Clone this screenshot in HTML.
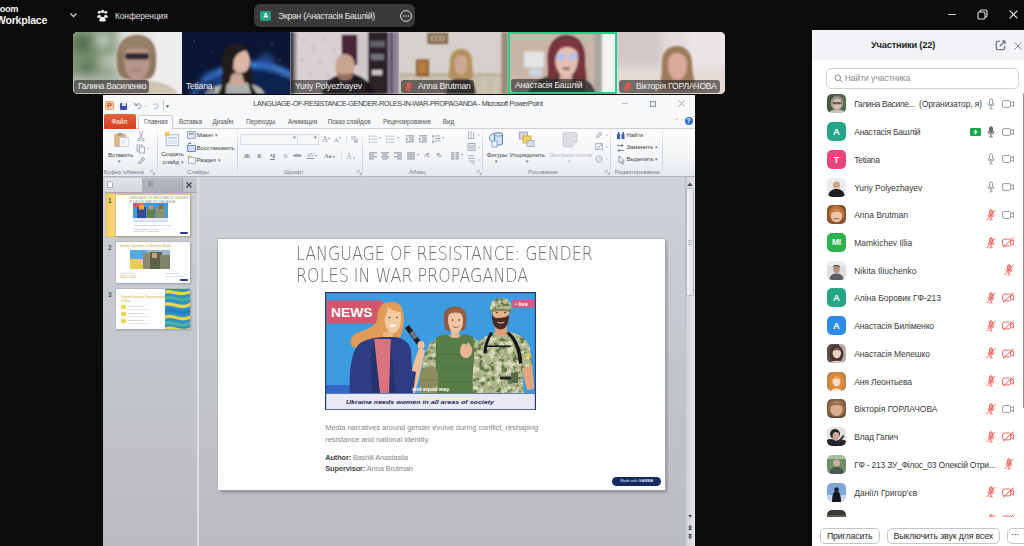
<!DOCTYPE html>
<html lang="ru">
<head>
<meta charset="utf-8">
<title>Zoom Workplace</title>
<style>
*{box-sizing:border-box;margin:0;padding:0}
html,body{width:1024px;height:546px;overflow:hidden;background:#0b0b0b}
body{position:relative;font-family:"Liberation Sans",sans-serif;color:#222}
.abs{position:absolute}
.t{position:absolute;white-space:nowrap;line-height:1}
/* ---------- top bar ---------- */
#top{left:0;top:0;width:1024px;height:30px;background:#0b0b0b}
#top .t{color:#e4e4e4}
/* ---------- video strip ---------- */
.tile{position:absolute;top:32px;height:62px;overflow:hidden}
.tile .nm{position:absolute;left:2px;bottom:1px;height:13px;padding:0 3px 0 4px;border-radius:3px;background:rgba(40,40,40,.62);color:#f2f2f2;font-size:8.6px;letter-spacing:-0.2px;line-height:13.5px;white-space:nowrap}
/* ---------- powerpoint ---------- */
#ppt{left:103px;top:95px;width:592px;height:451px;background:#c2c6cc;overflow:hidden}
#ppt .t{color:#444}
.tb{font-size:6.4px;color:#555 !important;letter-spacing:-0.1px}
.rb{font-size:6.1px;color:#444;letter-spacing:-0.1px}
.gl{font-size:6px;color:#7a808c !important;letter-spacing:-0.05px}
/* ---------- panel ---------- */
#panel{left:812px;top:30px;width:212px;height:516px;background:#fff;overflow:hidden}
.row{position:absolute;left:0;width:212px;height:19px}
.av{position:absolute;left:15px;top:0;width:19px;height:19px;border-radius:5px;overflow:hidden;color:#fff;font-weight:bold;font-size:9px;line-height:19px;text-align:center}
.row .n{position:absolute;left:42.2px;top:4px;font-size:8.5px;line-height:12px;color:#3a3a3a;white-space:nowrap;letter-spacing:0}
.ic{position:absolute;top:3.5px}
</style>
</head>
<body>
<!-- TOPBAR -->
<div id="top" class="abs">
<div class="t" style="left:-4.6px;top:4.6px;font-size:9.2px;font-weight:bold;letter-spacing:-0.3px;color:#f4f4f4">zoom</div>
<div class="t" style="left:-4px;top:14.6px;font-size:10.5px;font-weight:bold;letter-spacing:-0.2px;color:#f4f4f4">Workplace</div>
<svg class="abs" style="left:69px;top:12px" width="9" height="7" viewBox="0 0 9 7"><path d="M1.5 1.5 L4.5 4.7 L7.5 1.5" fill="none" stroke="#d8d8d8" stroke-width="1.2"/></svg>
<svg class="abs" style="left:96px;top:9px" width="13" height="13" viewBox="0 0 13 13" fill="#f2f2f2"><circle cx="3.3" cy="3.2" r="1.5"/><circle cx="6.5" cy="2.4" r="1.6"/><circle cx="9.7" cy="3.2" r="1.5"/><path d="M1.2 8.2c0-1.4 1-2.3 2.1-2.3s1.6.5 1.6 1.2v1.7H1.2z"/><path d="M11.8 8.2c0-1.4-1-2.3-2.1-2.3s-1.6.5-1.6 1.2v1.7h3.7z"/><path d="M3.3 11.6c0-2.3 1.4-3.9 3.2-3.9s3.2 1.6 3.2 3.9c0 .5-.3.8-.8.8H4.1c-.5 0-.8-.3-.8-.8z"/></svg>
<div class="t" style="left:115px;top:12px;font-size:8.3px;color:#e2e2e2;letter-spacing:-0.05px">Конференция</div>
<div class="abs" style="left:254px;top:4px;width:161px;height:23px;border-radius:6px;background:#3a3a3a"></div>
<div class="abs" style="left:260px;top:11px;width:11px;height:10px;border-radius:2px;background:#27a383;color:#fff;font-size:6.5px;line-height:10px;text-align:center;font-weight:bold">A</div>
<div class="t" style="left:278px;top:11.5px;font-size:8.8px;color:#e6e6e6;letter-spacing:-0.35px">Экран (Анастасія Башлій)</div>
<svg class="abs" style="left:399px;top:9px" width="14" height="14" viewBox="0 0 14 14"><circle cx="7" cy="7" r="5.4" fill="none" stroke="#ddd" stroke-width="1"/><circle cx="4.6" cy="7" r=".8" fill="#ddd"/><circle cx="7" cy="7" r=".8" fill="#ddd"/><circle cx="9.4" cy="7" r=".8" fill="#ddd"/></svg>
<div class="abs" style="left:948px;top:13.5px;width:8px;height:1.2px;background:#cfcfcf"></div>
<svg class="abs" style="left:977px;top:9px" width="11" height="11" viewBox="0 0 11 11" fill="none" stroke="#e0e0e0" stroke-width="1.1"><rect x="1" y="3" width="7" height="7" rx="1.2"/><path d="M3 3V2.2A1.2 1.2 0 0 1 4.2 1H8.8A1.2 1.2 0 0 1 10 2.2V6.8A1.2 1.2 0 0 1 8.8 8H8"/></svg>
<svg class="abs" style="left:1009px;top:9.5px" width="9" height="9" viewBox="0 0 9 9"><path d="M.6 .6L8.4 8.4M8.4 .6L.6 8.4" stroke="#ececec" stroke-width="1.2"/></svg>
</div>
<!-- TILES -->
<div id="tiles">
<svg width="0" height="0" style="position:absolute"><defs>
<filter id="b1" x="-20%" y="-20%" width="140%" height="140%"><feGaussianBlur stdDeviation="1.1"/></filter>
<filter id="b2" x="-20%" y="-20%" width="140%" height="140%"><feGaussianBlur stdDeviation="2.4"/></filter>
<filter id="b5" x="-30%" y="-30%" width="160%" height="160%"><feGaussianBlur stdDeviation="5"/></filter>
</defs></svg>
<!-- tile 1 -->
<div class="tile" style="left:73px;width:109px;border-radius:5px 0 0 5px;background:#d9dcd6">
<svg width="109" height="62" viewBox="0 0 109 62" style="position:absolute;left:0;top:0">
<rect width="109" height="62" fill="#dfe0dc"/>
<g filter="url(#b5)"><rect x="-8" y="-6" width="52" height="54" fill="#7d9474"/><circle cx="10" cy="12" r="10" fill="#54704c"/><circle cx="30" cy="8" r="7" fill="#c4d0c0"/><circle cx="36" cy="30" r="9" fill="#b4c0ac"/><circle cx="14" cy="36" r="8" fill="#5f7a58"/><rect x="76" y="-5" width="42" height="75" fill="#efeeed"/><rect x="-5" y="44" width="60" height="26" fill="#b4b9ae"/></g>
<g filter="url(#b1)"><path d="M30 62C32 54 42 50 54 49L76 49C90 50 101 54 105 62Z" fill="#cfc4b2"/><path d="M55 44H73V52H55Z" fill="#b4958a"/><path d="M44 32C42 12 51 3 64 3C77 3 85 12 83 32C83 40 80 45 76 47L52 47C47 45 44 40 44 32Z" fill="#8c7660"/><path d="M51 27C51 16 56 12 64 12C72 12 77 16 77 27C77 39 72 48 64 48C56 48 51 39 51 27Z" fill="#b6958a"/><path d="M46 22C48 8 57 4 64 4C74 4 81 9 82 23C75 17 70 16 64 16C58 16 52 17 46 22Z" fill="#97806a"/><rect x="52" y="21" width="24" height="6.5" rx="2.8" fill="#2e2a30"/><path d="M59 38.5H69" stroke="#8a6a62" stroke-width="1.2"/></g>
</svg>
<div class="nm" style="left:1px;letter-spacing:-0.33px">Галина Василенко</div>
</div>
<!-- tile 2 -->
<div class="tile" style="left:182px;width:108px;background:#0b1636">
<svg width="108" height="62" viewBox="0 0 108 62" style="position:absolute;left:0;top:0">
<rect width="108" height="62" fill="#0b1634"/>
<g filter="url(#b2)"><ellipse cx="70" cy="82" rx="66" ry="52" fill="#4a90f0"/><ellipse cx="70" cy="87" rx="66" ry="52" fill="#10244f"/><circle cx="84" cy="30" r="9" fill="#2a5eb4" opacity=".55"/><circle cx="30" cy="50" r="12" fill="#2458b0" opacity=".5"/></g>
<g fill="#cfe0ff" opacity=".7"><circle cx="12" cy="9" r=".5"/><circle cx="30" cy="20" r=".4"/><circle cx="90" cy="12" r=".5"/><circle cx="98" cy="28" r=".6"/><circle cx="20" cy="34" r=".4"/><circle cx="76" cy="8" r=".4"/><circle cx="100" cy="44" r=".5"/><circle cx="88" cy="40" r=".4"/></g>
<g filter="url(#b1)"><path d="M40 34C38 20 44 12 54 12C62 12 67 16 67 22L70 44C72 52 74 58 76 62L36 62C40 54 42 44 40 34Z" fill="#241a1c"/><path d="M22 62C25 56 34 53 44 52L50 50H62L68 52C76 53 81 56 83 62Z" fill="#b0aeac"/><path d="M40 50C40 54 38 58 36 62H44C44 58 44 54 45 51Z" fill="#241a1c"/><path d="M68 48C70 53 72 58 75 62H69C68 58 67 54 66 51Z" fill="#241a1c"/><path d="M50 40L60 42L63 53L47 53Z" fill="#cba595"/><path d="M49 24C50 17 56 15 61 17C66 19 69 25 68 31C67 38 63 41 58 41C52 41 48 33 49 24Z" fill="#dcb6a6"/><path d="M48 28C47 18 52 13 58 13C63 13 66 15 67 19C62 18 55 20 52 28C51 33 51 38 52 42L46 44C47 38 48 33 48 28Z" fill="#241a1c"/></g>
</svg>
<div class="nm" style="left:0;background:rgba(20,30,60,.3)">Tetiana</div>
</div>
<!-- tile 3 -->
<div class="tile" style="left:290px;width:109px;background:#cfc6c8">
<svg width="109" height="62" viewBox="0 0 109 62" style="position:absolute;left:0;top:0">
<rect width="109" height="62" fill="#d9d0d3"/>
<g filter="url(#b1)"><rect x="0" y="0" width="4" height="62" fill="#3f3840"/><rect x="4" y="0" width="3" height="62" fill="#a69aa2"/><g fill="#c9b6be"><circle cx="14" cy="8" r="1.5"/><circle cx="24" cy="16" r="1.5"/><circle cx="34" cy="7" r="1.5"/><circle cx="44" cy="18" r="1.5"/><circle cx="12" cy="28" r="1.5"/><circle cx="30" cy="30" r="1.5"/><circle cx="20" cy="42" r="1.5"/><circle cx="38" cy="44" r="1.5"/></g><rect x="52" y="3" width="15.5" height="30" fill="#4a2634"/><rect x="67.5" y="0" width="10.5" height="62" fill="#cfc8cd"/><rect x="78" y="0" width="20" height="62" fill="#2a2228"/><rect x="80" y="9" width="15" height="6" fill="#5f606a"/><rect x="81" y="22" width="13" height="6" fill="#6f7078"/><rect x="82" y="38" width="10" height="5" fill="#c9c4c9"/><rect x="98" y="0" width="11" height="62" fill="#8a8494"/><rect x="100.5" y="0" width="2" height="62" fill="#3f3a46"/>
<path d="M32 62C34 50 41 46 48 44L63 42C72 44 81 50 85 62Z" fill="#1b181b"/><path d="M45.5 36C45 27 49 22 55 22C61 22 65 27 64.5 36C64 44 60 49 55 49C50 49 46 44 45.5 36Z" fill="#caa390"/><path d="M47 40C50 43 60 43 63.5 40C63 46 60 49.5 55 49.5C50 49.5 47.5 46 47 40Z" fill="#94705e"/></g>
</svg>
<div class="nm" style="left:1px">Yuriy Polyezhayev</div>
</div>
<!-- tile 4 -->
<div class="tile" style="left:399px;width:109px;background:#d6d2cd">
<svg width="109" height="62" viewBox="0 0 109 62" style="position:absolute;left:0;top:0">
<rect width="109" height="62" fill="#d5d1cc"/>
<g filter="url(#b1)"><rect x="0" y="43" width="109" height="19" fill="#c8bfac"/><rect x="0" y="41.5" width="109" height="2" fill="#b6a88e"/><g fill="#d2c9b6"><rect x="10" y="45" width="2" height="17"/><rect x="24" y="45" width="2" height="17"/><rect x="38" y="45" width="2" height="17"/><rect x="84" y="45" width="2" height="17"/><rect x="96" y="45" width="2" height="17"/></g><rect x="28.5" y="1" width="20.5" height="11" fill="#7d6546"/><rect x="31.5" y="3.5" width="14.5" height="5.5" fill="#bca98c"/><g fill="#4a3a2a"><rect x="34" y="5" width="2" height="2.5"/><rect x="38" y="5" width="2" height="2.5"/><rect x="42" y="5" width="2" height="2.5"/></g><rect x="17" y="27.5" width="13" height="17" fill="#8a5f38"/><rect x="19" y="29.5" width="9" height="12" fill="#b67c42"/><rect x="102.5" y="0" width="6.5" height="62" fill="#9a8a78"/>
<path d="M47 62C48 52 52 48 56 47L68 47C73 48 76 52 77 62Z" fill="#3d3833"/><path d="M51 33C50 22 55 17 62 17C69 17 74 22 73 33C74 40 75 44 73 47L51 47C49 44 50 39 51 33Z" fill="#b4925f"/><path d="M55.5 31C55.5 26 58 23.5 62 23.5C66 23.5 68.5 26 68.5 31C68.5 38 66 42.5 62 42.5C58 42.5 55.5 38 55.5 31Z" fill="#cba791"/></g>
</svg>
<div class="nm" style="left:2px;padding-left:17px">Anna Brutman<svg style="position:absolute;left:3px;top:1.5px" width="9" height="10" viewBox="0 0 9 10"><rect x="3" y=".5" width="3" height="5.5" rx="1.5" fill="#f2564d"/><path d="M1.5 4.5a3 3 0 0 0 6 0M4.5 7.5V9.5" stroke="#f2564d" stroke-width="1" fill="none"/><path d="M8 .8L1 9.2" stroke="#f2564d" stroke-width="1.1"/></svg></div>
</div>
<!-- tile 5 -->
<div class="tile" style="left:508px;width:109px;background:#c9b9aa">
<svg width="109" height="62" viewBox="0 0 109 62" style="position:absolute;left:0;top:0">
<rect width="109" height="62" fill="#c8b6a8"/>
<g filter="url(#b1)"><rect x="93.5" y="0" width="16" height="62" fill="#f5f4f2"/><rect x="86.5" y="0" width="7.5" height="62" fill="#aca49e"/><rect x="16" y="19.5" width="20" height="16" fill="#e3e3e6"/><rect x="21.5" y="36.5" width="12.5" height="8" fill="#cbd6e2"/>
<path d="M40 32C38 13 47 3 58 3C70 3 78 12 77 30C77 40 80 48 77 54L42 54C38 47 41 40 40 32Z" fill="#733039"/><path d="M20 62C24 50 34 45 44 44L72 46C81 48 86 54 88 62Z" fill="#47403f"/><path d="M52 40H64V50H52Z" fill="#d9ae9f"/><path d="M47 26C47 16 52 12 58.5 12C65 12 70 16 70 26C70 37 65 44.5 58.5 44.5C52 44.5 47 37 47 26Z" fill="#e5c0b2"/><path d="M44 30C42 14 50 6 59 6C68 6 75 13 73 28C71 20 66 15 59 15C52 15 48 20 47 30C46 38 47 44 48 50L42 50C43 43 45 37 44 30Z" fill="#7a343e"/><path d="M72 24C74 34 73 44 75 52L69 50C70 42 71 34 70 26Z" fill="#7a343e"/><rect x="48.5" y="21.5" width="9" height="6.5" rx="2.2" fill="#b4c2ee"/><rect x="60.5" y="21.5" width="9" height="6.5" rx="2.2" fill="#b4c2ee"/><path d="M55 35.5h7v2.2h-7z" fill="#8a4444"/></g>
</svg>
<div class="abs" style="left:0;top:0;width:109px;height:62px;border:2px solid #24d18b"></div>
<div class="nm" style="left:3px;bottom:2px">Анастасія Башлій</div>
</div>
<!-- tile 6 -->
<div class="tile" style="left:617px;width:108px;border-radius:0 5px 5px 0;background:#e1d9d8">
<svg width="108" height="62" viewBox="0 0 108 62" style="position:absolute;left:0;top:0">
<rect width="108" height="62" fill="#e3dcdb"/>
<g filter="url(#b5)"><rect x="-5" y="-5" width="50" height="40" fill="#d2c8c8"/><rect x="70" y="-5" width="50" height="40" fill="#ebe6e6"/><rect x="-5" y="44" width="120" height="24" fill="#e6dad2"/></g>
<g filter="url(#b1)"><path d="M32 62C36 54 44 51 50 50L70 50C78 51 84 55 88 62Z" fill="#d9c6ba"/><path d="M45 34C44 20 51 14 60 14C69 14 76 21 75 34C76 44 79 52 76 58L44 58C42 52 45 44 45 34Z" fill="#9b7a5c"/><path d="M51 32C51 24 55 21 60 21C66 21 70 25 70 32C70 42 66 48 60 48C55 48 51 42 51 32Z" fill="#d9a999"/></g>
</svg>
<div class="nm" style="left:2px;padding-left:17px">Вікторія ГОРЛАЧОВА<svg style="position:absolute;left:4px;top:1.5px" width="9" height="10" viewBox="0 0 9 10"><rect x="3" y=".5" width="3" height="5.5" rx="1.5" fill="#f2564d"/><path d="M1.5 4.5a3 3 0 0 0 6 0M4.5 7.5V9.5" stroke="#f2564d" stroke-width="1" fill="none"/><path d="M8 .8L1 9.2" stroke="#f2564d" stroke-width="1.1"/></svg></div>
</div>
</div>
<!-- PPT -->
<div id="ppt" class="abs">
<!-- title bar + tabs + ribbon -->
<div class="abs" style="left:0;top:0;width:592px;height:33px;background:#f6f8fa"></div>
<div class="abs" style="left:0;top:33px;width:592px;height:48.5px;background:linear-gradient(#fdfdfe,#f3f5f7 60%,#e6e9ed);border-top:1px solid #ccd0d6;border-bottom:1px solid #aeb3bb"></div>
<!-- qat -->
<div class="abs" style="left:2px;top:6px;width:9px;height:9px;border-radius:1.5px;background:#f6c9a0;border:1px solid #e8a070;color:#c8501c;font-size:7.5px;font-weight:bold;line-height:7.5px;text-align:center">P</div>
<div class="abs" style="left:17px;top:7.5px;width:7px;height:7px;background:#3b4fa8;border-radius:1px"></div><div class="abs" style="left:19px;top:7.5px;width:3.5px;height:3px;background:#dfe4f4"></div>
<svg class="abs" style="left:31px;top:7px" width="30" height="8" viewBox="0 0 30 8" fill="none" stroke="#8a90a0" stroke-width="1"><path d="M2 3C3.5 1 7 1.5 7 4.5C7 6 5.5 7 3.5 6.5M1 .8V3.5H3.8"/><path d="M19 3C20.5 1 24 1.5 24 4.5C24 6 22.5 7 20.5 6.5" stroke="#a4a9b6"/><path d="M11 4H12.5" stroke="#aab"/></svg>
<div class="abs" style="left:59.5px;top:5px;width:1px;height:10px;background:#c5c9d0"></div>
<div class="t" style="left:62px;top:8.5px;font-size:5px;color:#555">▼</div>
<div class="t" id="ptitle" style="left:150.3px;top:5px;font-size:7.3px;color:#3c3c3c;letter-spacing:-0.4px">LANGUAGE-OF-RESISTANCE-GENDER-ROLES-IN-WAR-PROPAGANDA - Microsoft PowerPoint</div>
<div class="abs" style="left:519px;top:8px;width:6px;height:1px;background:#b8bcc4"></div>
<div class="abs" style="left:547px;top:5.5px;width:6px;height:6px;border:1px solid #8d929c"></div>
<svg class="abs" style="left:574.5px;top:5px" width="7" height="7" viewBox="0 0 7 7"><path d="M.5 .5L6.5 6.5M6.5 .5L.5 6.5" stroke="#9a9fa8" stroke-width="1"/></svg>
<!-- tabs -->
<div class="abs" style="left:1px;top:19px;width:32px;height:14.5px;border-radius:2px 2px 0 0;background:linear-gradient(#e2603a,#d4421f);"></div>
<div class="t" style="left:8.5px;top:23.5px;font-size:6.4px;color:#fff">Файл</div>
<div class="abs" style="left:35px;top:19.5px;width:34.5px;height:15px;border:1px solid #c9cdd4;border-bottom:0;border-radius:2.5px 2.5px 0 0;background:#fdfdfe"></div>
<div class="t tb" style="left:41px;top:23.5px">Главная</div><div class="t tb" style="left:76px;top:23.5px">Вставка</div><div class="t tb" style="left:109.5px;top:23.5px">Дизайн</div><div class="t tb" style="left:143px;top:23.5px">Переходы</div><div class="t tb" style="left:185px;top:23.5px">Анимация</div><div class="t tb" style="left:224.8px;top:23.5px">Показ слайдов</div><div class="t tb" style="left:280px;top:23.5px">Рецензирование</div><div class="t tb" style="left:339.8px;top:23.5px">Вид</div>
<div class="abs" style="left:581.5px;top:22px;width:8px;height:8px;border-radius:50%;background:#2f6fd0;color:#fff;font-size:6.5px;font-weight:bold;line-height:8px;text-align:center">?</div>
<div class="t" style="left:571px;top:23.5px;font-size:5.5px;color:#9aa">⌃</div>
<div class="abs" style="left:54px;top:35px;width:1px;height:44px;background:linear-gradient(rgba(200,204,212,.2),#cfd3da 40%,#cfd3da 70%,rgba(200,204,212,.2))"></div>
<div class="abs" style="left:134px;top:35px;width:1px;height:44px;background:linear-gradient(rgba(200,204,212,.2),#cfd3da 40%,#cfd3da 70%,rgba(200,204,212,.2))"></div>
<div class="abs" style="left:259px;top:38.6px;width:1px;height:44px;background:linear-gradient(rgba(200,204,212,.2),#cfd3da 40%,#cfd3da 70%,rgba(200,204,212,.2))"></div>
<div class="abs" style="left:379px;top:35px;width:1px;height:44px;background:linear-gradient(rgba(200,204,212,.2),#cfd3da 40%,#cfd3da 70%,rgba(200,204,212,.2))"></div>
<div class="abs" style="left:507px;top:35px;width:1px;height:44px;background:linear-gradient(rgba(200,204,212,.2),#cfd3da 40%,#cfd3da 70%,rgba(200,204,212,.2))"></div>
<div class="abs" style="left:559px;top:35px;width:1px;height:44px;background:linear-gradient(rgba(200,204,212,.2),#cfd3da 40%,#cfd3da 70%,rgba(200,204,212,.2))"></div>
<div class="t gl" style="left:0.5px;top:73.6px;">Буфер обмена</div>
<div class="t gl" style="left:84px;top:73.6px;">Слайды</div>
<div class="t gl" style="left:181px;top:73.6px;">Шрифт</div>
<div class="t gl" style="left:306px;top:73.6px;">Абзац</div>
<div class="t gl" style="left:425px;top:73.6px;">Рисование</div>
<div class="t gl" style="left:511.8px;top:73.6px;">Редактирование</div>
<svg class="abs" style="left:47px;top:74.5px" width="5" height="5" viewBox="0 0 5 5"><path d="M.5 3V.5H3M2 2L4.5 4.5M4.5 2.5V4.5H2.5" fill="none" stroke="#9aa0ac" stroke-width=".7"/></svg>
<svg class="abs" style="left:254px;top:74.5px" width="5" height="5" viewBox="0 0 5 5"><path d="M.5 3V.5H3M2 2L4.5 4.5M4.5 2.5V4.5H2.5" fill="none" stroke="#9aa0ac" stroke-width=".7"/></svg>
<svg class="abs" style="left:374px;top:74.5px" width="5" height="5" viewBox="0 0 5 5"><path d="M.5 3V.5H3M2 2L4.5 4.5M4.5 2.5V4.5H2.5" fill="none" stroke="#9aa0ac" stroke-width=".7"/></svg>
<svg class="abs" style="left:502px;top:74.5px" width="5" height="5" viewBox="0 0 5 5"><path d="M.5 3V.5H3M2 2L4.5 4.5M4.5 2.5V4.5H2.5" fill="none" stroke="#9aa0ac" stroke-width=".7"/></svg>
<svg class="abs" style="left:10.5px;top:36.5px" width="15.5" height="15.5" viewBox="0 0 20 20"><rect x="1" y="3" width="14" height="16" rx="1.5" fill="#dcbc82" stroke="#b8965a" stroke-width=".8"/><rect x="5" y="1" width="6" height="4" rx="1" fill="#9aa0aa"/><path d="M7 7H18.5V19H7Z" fill="#fcfcfd" stroke="#a9b4c8" stroke-width=".8"/><path d="M9 10.5H16M9 13H16M9 15.5H14" stroke="#c0c8d8" stroke-width=".8"/></svg>
<div class="t rb" style="left:5px;top:56.6px;">Вставить</div>
<div class="t rb" style="left:15px;top:63.9px;font-size:5px;color:#777">▾</div>
<svg class="abs" style="left:33px;top:35px" width="14" height="36" viewBox="0 0 14 36" fill="none" stroke="#a8aebc" stroke-width="1"><path d="M3 1L6 8M7 1L4 8"/><circle cx="3" cy="9.5" r="1.3"/><circle cx="7" cy="9.5" r="1.3"/><rect x="1" y="15" width="5" height="6" fill="#e4e8f0"/><rect x="3.5" y="17" width="5" height="6" fill="#f4f6fa"/><path d="M11 18.5h2" stroke="#bbb"/><path d="M2 33L7 27L9 29L4 34Z" fill="#c9cfdc" stroke="#aab"/></svg>
<svg class="abs" style="left:60.5px;top:36px" width="16" height="16.8" viewBox="0 0 19 20"><rect x="2.5" y="4.5" width="15" height="13" fill="#f4f6fb" stroke="#98a6c0" stroke-width=".9"/><rect x="4.5" y="7" width="11" height="2.5" fill="#c9d3e6"/><rect x="4.5" y="11" width="11" height="4.5" fill="#dde4f0"/><path d="M1 2.5L5.5 1L6 5L2 6Z" fill="#f0d050" stroke="#d8b020" stroke-width=".6"/></svg>
<div class="t rb" style="left:58px;top:56.1px;">Создать</div>
<div class="t rb" style="left:59.5px;top:64.1px;">слайд <span style="font-size:5px;color:#777">▾</span></div>
<svg class="abs" style="left:83.5px;top:36px" width="9" height="34" viewBox="0 0 9 34"><rect x=".5" y=".5" width="8" height="7" fill="#dfe5f0" stroke="#8e9cb8" stroke-width=".8"/><rect x="2" y="2" width="5" height="1.5" fill="#8e9cb8"/><rect x=".5" y="14.5" width="8" height="6" fill="#cfdcf0" stroke="#4f78b8" stroke-width=".8"/><path d="M1 13L4 12" stroke="#3a68b0"/><rect x="1.5" y="26.5" width="7" height="6" fill="#f4f6fa" stroke="#98a6c0" stroke-width=".8"/><path d="M.5 25.5h4" stroke="#e0c040" stroke-width="1.2"/></svg>
<div class="t rb" style="left:94px;top:36.6px;">Макет <span style="font-size:5px;color:#777">▾</span></div>
<div class="t rb" style="left:93.5px;top:49.6px;">Восстановить</div>
<div class="t rb" style="left:93.5px;top:61.6px;">Раздел <span style="font-size:5px;color:#777">▾</span></div>
<div class="abs" style="left:137px;top:38.6px;width:58px;height:11.5px;background:#f7f8fa;border:1px solid #d9dde4;border-radius:1px"></div>
<div class="abs" style="left:195px;top:38.6px;width:21px;height:11.5px;background:#f7f8fa;border:1px solid #d9dde4;border-left:0;border-radius:1px"></div>
<div class="t rb" style="left:190px;top:40.7px;font-size:4.5px;color:#778">▾</div>
<div class="t rb" style="left:211px;top:40.7px;font-size:4.5px;color:#778">▾</div>
<div class="t rb" style="left:219px;top:40.5px;font-family:'Liberation Serif',serif;font-size:8px;color:#8a909c">A<span style="font-size:4px;vertical-align:3px">▴</span></div>
<div class="t rb" style="left:231px;top:41.0px;font-family:'Liberation Serif',serif;font-size:6.5px;color:#8a909c">A<span style="font-size:4px;vertical-align:3px">▾</span></div>
<svg class="abs" style="left:247px;top:39.6px" width="9" height="9" viewBox="0 0 9 9"><path d="M1 2h5M1 4h4M4 1l3 3" stroke="#a9afbc" stroke-width=".9" fill="none"/><rect x="4" y="4.5" width="4" height="3.5" fill="#c8b8d0"/></svg>
<div class="abs" style="left:243px;top:39.6px;width:1px;height:10px;background:#dde0e6"></div>
<div class="t rb" style="left:140.5px;top:57.6px;font-family:'Liberation Serif',serif;font-weight:bold;font-size:7px;color:#7d8390">Ж</div>
<div class="t rb" style="left:154px;top:57.6px;font-family:'Liberation Serif',serif;font-weight:bold;font-size:7px;color:#7d8390"><i>К</i></div>
<div class="t rb" style="left:167px;top:57.6px;font-family:'Liberation Serif',serif;font-weight:bold;font-size:7px;color:#7d8390"><u>Ч</u></div>
<div class="t rb" style="left:180.5px;top:57.6px;font-family:'Liberation Serif',serif;font-weight:bold;font-size:7px;color:#7d8390;color:#a0a5b0">S</div>
<div class="t rb" style="left:190.5px;top:57.9px;font-size:5px;color:#8a909c"><s>abc</s></div>
<div class="t rb" style="left:204px;top:57.6px;font-family:'Liberation Serif',serif;font-size:5.5px;color:#8a909c"><u>AV</u> <span style="font-size:4px">▾</span></div>
<div class="t rb" style="left:221px;top:57.6px;font-family:'Liberation Serif',serif;font-weight:bold;font-size:6.5px;color:#8a909c">Aa <span style="font-size:4px">▾</span></div>
<div class="abs" style="left:237.5px;top:56px;width:1px;height:10px;background:#dde0e6"></div>
<div class="t rb" style="left:243px;top:57.6px;font-family:'Liberation Serif',serif;font-size:8px;color:#a4a9b4">A <span style="font-size:4px">▾</span></div>
<svg class="abs" style="left:265.5px;top:40.1px" width="9" height="9" viewBox="0 0 9 9"><rect x="0" y="0.5" width="1.3" height="1.3" fill="#a0a6b4"/><rect x="2.5" y="0.7" width="6" height=".9" fill="#b4bac6"/><rect x="0" y="3.5" width="1.3" height="1.3" fill="#a0a6b4"/><rect x="2.5" y="3.7" width="6" height=".9" fill="#b4bac6"/><rect x="0" y="6.5" width="1.3" height="1.3" fill="#a0a6b4"/><rect x="2.5" y="6.7" width="6" height=".9" fill="#b4bac6"/></svg>
<div class="t rb" style="left:276px;top:40.7px;font-size:4px;color:#99a">▾</div>
<svg class="abs" style="left:283px;top:40.1px" width="9" height="9" viewBox="0 0 9 9"><rect x="0" y="0.5" width="1.3" height="1.3" fill="#a0a6b4"/><rect x="2.5" y="0.7" width="6" height=".9" fill="#b4bac6"/><rect x="0" y="3.5" width="1.3" height="1.3" fill="#a0a6b4"/><rect x="2.5" y="3.7" width="6" height=".9" fill="#b4bac6"/><rect x="0" y="6.5" width="1.3" height="1.3" fill="#a0a6b4"/><rect x="2.5" y="6.7" width="6" height=".9" fill="#b4bac6"/></svg>
<div class="t rb" style="left:293.5px;top:40.7px;font-size:4px;color:#99a">▾</div>
<svg class="abs" style="left:303px;top:40.1px" width="9" height="9" viewBox="0 0 9 9"><rect x="0" y="0.3" width="8" height="1.1" fill="#8d93a0"/><rect x="3" y="2.3" width="5" height="1.1" fill="#8d93a0"/><rect x="3" y="4.3" width="5" height="1.1" fill="#8d93a0"/><rect x="0" y="6.3" width="8" height="1.1" fill="#8d93a0"/><path d="M0 2.5L2 4L0 5.5Z" fill="#6a8ac0"/></svg>
<svg class="abs" style="left:315.5px;top:40.1px" width="9" height="9" viewBox="0 0 9 9"><rect x="0" y="0.3" width="8" height="1.1" fill="#8d93a0"/><rect x="3" y="2.3" width="5" height="1.1" fill="#8d93a0"/><rect x="3" y="4.3" width="5" height="1.1" fill="#8d93a0"/><rect x="0" y="6.3" width="8" height="1.1" fill="#8d93a0"/><path d="M0 2.5L2 4L0 5.5Z" fill="#6a8ac0"/></svg>
<svg class="abs" style="left:329px;top:40.1px" width="9" height="9" viewBox="0 0 9 9"><rect x="3" y="0.5" width="5.5" height="1" fill="#a0a6b4"/><rect x="3" y="3.0" width="5.5" height="1" fill="#a0a6b4"/><rect x="3" y="5.5" width="5.5" height="1" fill="#a0a6b4"/><path d="M1 0L2 1.5H0ZM1 8L2 6.5H0ZM1 1.5V6.5" fill="#8a90a0" stroke="#8a90a0" stroke-width=".5"/></svg>
<div class="t rb" style="left:339px;top:40.7px;font-size:4px;color:#99a">▾</div>
<svg class="abs" style="left:265.5px;top:57px" width="9" height="9" viewBox="0 0 9 9"><rect x="0" y="0.3" width="8" height="1.1" fill="#8d93a0"/><rect x="0" y="2.3" width="5" height="1.1" fill="#8d93a0"/><rect x="0" y="4.3" width="8" height="1.1" fill="#8d93a0"/><rect x="0" y="6.3" width="5" height="1.1" fill="#8d93a0"/></svg>
<svg class="abs" style="left:278px;top:57px" width="9" height="9" viewBox="0 0 9 9"><rect x="0.0" y="0.3" width="8" height="1.1" fill="#8d93a0"/><rect x="1.5" y="2.3" width="5" height="1.1" fill="#8d93a0"/><rect x="0.0" y="4.3" width="8" height="1.1" fill="#8d93a0"/><rect x="1.5" y="6.3" width="5" height="1.1" fill="#8d93a0"/></svg>
<svg class="abs" style="left:291px;top:57px" width="9" height="9" viewBox="0 0 9 9"><rect x="0" y="0.3" width="8" height="1.1" fill="#8d93a0"/><rect x="3" y="2.3" width="5" height="1.1" fill="#8d93a0"/><rect x="0" y="4.3" width="8" height="1.1" fill="#8d93a0"/><rect x="3" y="6.3" width="5" height="1.1" fill="#8d93a0"/></svg>
<svg class="abs" style="left:303.5px;top:57px" width="9" height="9" viewBox="0 0 9 9"><rect x="0" y="0.3" width="8" height="1.1" fill="#8d93a0"/><rect x="0" y="2.3" width="8" height="1.1" fill="#8d93a0"/><rect x="0" y="4.3" width="8" height="1.1" fill="#8d93a0"/><rect x="0" y="6.3" width="8" height="1.1" fill="#8d93a0"/></svg>
<div class="t rb" style="left:313.5px;top:57.6px;font-size:4px;color:#99a">▾</div>
<div class="t rb" style="left:321px;top:57.1px;font-size:6px;color:#8a909c;font-weight:bold">›¶</div>
<div class="t rb" style="left:333.5px;top:57.1px;font-size:6px;color:#8a909c;font-weight:bold">¶‹</div>
<svg class="abs" style="left:347.5px;top:57px" width="9" height="9" viewBox="0 0 9 9"><rect x="0" y="0.3" width="3.5" height="1.1" fill="#8d93a0"/><rect x="4.5" y="0.3" width="3.5" height="1.1" fill="#8d93a0"/><rect x="0" y="2.3" width="3.5" height="1.1" fill="#8d93a0"/><rect x="4.5" y="2.3" width="3.5" height="1.1" fill="#8d93a0"/><rect x="0" y="4.3" width="3.5" height="1.1" fill="#8d93a0"/><rect x="4.5" y="4.3" width="3.5" height="1.1" fill="#8d93a0"/><rect x="0" y="6.3" width="3.5" height="1.1" fill="#8d93a0"/><rect x="4.5" y="6.3" width="3.5" height="1.1" fill="#8d93a0"/></svg>
<div class="t rb" style="left:358px;top:57.6px;font-size:4px;color:#99a">▾</div>
<svg class="abs" style="left:364px;top:34.5px" width="14" height="36" viewBox="0 0 14 36" fill="none" stroke="#a3a9b6" stroke-width=".9"><path d="M1.5 1V8M4 1V8M6.5 2V8M1 8.5H7.5"/><path d="M11 5h2" stroke="#bbc"/><rect x="1" y="13.5" width="7" height="7" fill="#e6e9f0"/><path d="M2 16H7M2 18H7"/><path d="M11 17.5h2" stroke="#bbc"/><path d="M1 26H7M1 28.5H8M2 31H8M4 33H8"/><path d="M11 30h2" stroke="#bbc"/></svg>
<svg class="abs" style="left:385px;top:35px" width="18" height="20" viewBox="0 0 18 20"><circle cx="6" cy="8" r="4.5" fill="#e3ecf8" stroke="#5d8ed0" stroke-width="1"/><rect x="6.5" y="3" width="8" height="12" rx="2" fill="#d5e2f5" stroke="#4a7cc4" stroke-width="1"/><ellipse cx="10.5" cy="4.5" rx="4" ry="1.6" fill="#eef4fc" stroke="#4a7cc4" stroke-width=".8"/><rect x="4" y="11" width="5" height="6" fill="#eef3fa" stroke="#7a9cd0" stroke-width=".8"/></svg>
<div class="t rb" style="left:383.8px;top:56.6px;">Фигуры</div>
<div class="t rb" style="left:391.5px;top:63.9px;font-size:5px;color:#777">▾</div>
<svg class="abs" style="left:415px;top:35px" width="18" height="20" viewBox="0 0 18 20"><rect x="1.5" y="2" width="8" height="7" fill="#d2d6de" stroke="#9aa0ae" stroke-width=".8"/><rect x="5" y="6" width="8" height="7" fill="#eed36a" stroke="#c8a830" stroke-width=".8"/><rect x="9" y="10.5" width="7" height="6" fill="#d8dce4" stroke="#9aa0ae" stroke-width=".8"/></svg>
<div class="t rb" style="left:406.6px;top:56.6px;">Упорядочить</div>
<div class="t rb" style="left:422.5px;top:63.9px;font-size:5px;color:#777">▾</div>
<svg class="abs" style="left:458px;top:36px" width="18" height="18" viewBox="0 0 18 18"><path d="M2 3Q2 1.5 3.5 1.5H14.5Q16 1.5 16 3V11L11 16H3.5Q2 16 2 14.5Z" fill="#dcdee2" stroke="#c4c7cd" stroke-width=".8"/><path d="M16 11H12.5Q11 11 11 12.5V16" fill="#eceef1" stroke="#c4c7cd" stroke-width=".8"/></svg>
<div class="t rb" style="left:446px;top:56.6px;color:#b4b8c0">Экспресс-стили</div>
<div class="t rb" style="left:465px;top:63.9px;font-size:5px;color:#bbb">▾</div>
<svg class="abs" style="left:491px;top:35px" width="16" height="36" viewBox="0 0 16 36" fill="none" stroke="#b0b5c0" stroke-width=".9"><path d="M2 7L6 2L8 4L4 8Z" fill="#d4d8e0"/><path d="M12 5h2" stroke="#bbc"/><rect x="1.5" y="13.5" width="7" height="6" fill="#eef0f4"/><path d="M2 20L8 14" stroke="#99a"/><path d="M12 17h2" stroke="#bbc"/><circle cx="5" cy="29" r="3.2" fill="#e0e3ea"/><path d="M12 29h2" stroke="#bbc"/></svg>
<svg class="abs" style="left:512.5px;top:35.5px" width="10" height="34" viewBox="0 0 10 34"><path d="M1 3h3v5H1zM5.5 3h3v5h-3zM2 1h1.5v2H2zM6.5 1H8v2H6.5z" fill="#3d5fa8"/><path d="M1 14.5H7M5.5 13L7 14.5L5.5 16M8 19.5H2M3.5 18L2 19.5L3.5 21" stroke="#6a7488" stroke-width=".9" fill="none"/><path d="M3 25V32L5 30.5L6.5 33.5L7.5 33L6 30H8.5Z" fill="#f4f6fa" stroke="#6a7488" stroke-width=".7"/></svg>
<div class="t rb" style="left:523.5px;top:36.6px;">Найти</div>
<div class="t rb" style="left:523.5px;top:48.6px;">Заменить <span style="font-size:5px;color:#777">▾</span></div>
<div class="t rb" style="left:523.5px;top:60.6px;">Выделить <span style="font-size:5px;color:#777">▾</span></div>
<div class="abs" style="left:0px;top:82px;width:592px;height:369px;background:linear-gradient(#cfd2d8,#c5c8ce 40%,#bbbcc0)"></div>
<div class="abs" style="left:1.5px;top:82px;width:92.5px;height:369px;background:linear-gradient(#ccd0d6,#c3c6cc 50%,#bbbcc0)"></div>
<div class="abs" style="left:93.5px;top:82px;width:2px;height:369px;background:#dcdee2"></div>

<div class="abs" style="left:1.5px;top:82.5px;width:38px;height:14px;background:linear-gradient(#e4e6ea,#d3d6db);border-right:1px solid #aeb2ba"></div>
<div class="abs" style="left:39.5px;top:82.5px;width:40px;height:14px;background:linear-gradient(#b4b8c0,#a9adb5);border-right:1px solid #9ca0a8"></div>
<div class="abs" style="left:79.5px;top:82.5px;width:14.5px;height:14px;background:linear-gradient(#c6cad0,#bbbfc6)"></div>
<div class="abs" style="left:1.5px;top:96.5px;width:92.5px;height:1px;background:#a4a8b0"></div>
<svg class="abs" style="left:4px;top:85.5px" width="6" height="7" viewBox="0 0 6 7"><path d="M.5 .5H4L5.5 2V6.5H.5Z" fill="#fff" stroke="#8a8f98" stroke-width=".7"/></svg>
<svg class="abs" style="left:43.5px;top:86px" width="7" height="7" viewBox="0 0 7 7"><path d="M1 1H6M1 3H6M1 5H6" stroke="#7d828c" stroke-width=".9"/></svg>
<svg class="abs" style="left:83px;top:86.5px" width="6" height="6" viewBox="0 0 6 6"><path d="M.5 .5L5.5 5.5M5.5 .5L.5 5.5" stroke="#3f434a" stroke-width="1.3"/></svg>
<div class="abs" style="left:2.5px;top:97.8px;width:85.7px;height:44.4px;background:linear-gradient(90deg,#f6cf62,#fbe59a 25%,#fdf3cc 60%,#fbe8a8);border:1px solid #e8c050;border-radius:1px"></div>
<div class="t" style="left:5px;top:102.5px;font-size:6.5px;font-weight:bold;color:#555;line-height:1">1</div><div class="t" style="left:5px;top:149.5px;font-size:6.5px;font-weight:bold;color:#555;line-height:1">2</div><div class="t" style="left:5px;top:197px;font-size:6.5px;font-weight:bold;color:#555;line-height:1">3</div>
<div class="abs" style="left:13px;top:99.7px;width:74px;height:41px;background:#fdfdfd;box-shadow:0 0 0 .6px #aab0ba,1px 1px 2px rgba(0,0,0,.25);overflow:hidden"><div style="position:absolute;white-space:nowrap;line-height:1;font-size:3.2px;color:#9a9a9a;left:13px;top:2.5px">LANGUAGE OF RESISTANCE: GENDER</div><div style="position:absolute;white-space:nowrap;line-height:1;font-size:3.2px;color:#9a9a9a;left:13px;top:6px">ROLES IN WAR PROPAGANDA</div><svg style="position:absolute;left:17.4px;top:8.8px" width="35" height="18.5" viewBox="0 0 35 18.5"><rect width="35" height="18.5" fill="#3f9bdd"/><rect x="0" y="1" width="9" height="3.5" fill="#cf566b"/><rect x="4" y="4" width="9" height="11" fill="#3a4a8a"/><rect x="6" y="1.5" width="5" height="5" fill="#e2a060"/><rect x="14" y="6" width="8" height="9" fill="#66804a"/><rect x="16" y="2.5" width="4" height="4" fill="#c89878"/><rect x="23" y="5" width="9" height="10" fill="#8a9470"/><rect x="26" y="1.5" width="4" height="4.5" fill="#7a6a50"/><rect x="0" y="15" width="35" height="3.5" fill="#e6e6f4"/></svg><div style="position:absolute;white-space:nowrap;line-height:1;font-size:3.2px;color:#9a9a9a;left:17.5px;top:29px;font-size:2.2px">Media narratives around gender evolve</div><div style="position:absolute;white-space:nowrap;line-height:1;font-size:3.2px;color:#9a9a9a;left:17.5px;top:33px;font-size:2.2px">Author: Bashlii Anastasiia</div><div style="position:absolute;white-space:nowrap;line-height:1;font-size:3.2px;color:#9a9a9a;left:17.5px;top:35.5px;font-size:2.2px">Supervisor: Anna Brutman</div><div style="position:absolute;right:2px;bottom:2px;width:8px;height:2px;background:#2a3a80;border-radius:1px"></div></div>
<div class="abs" style="left:13px;top:146.5px;width:74px;height:41px;background:#fdfdfd;box-shadow:0 0 0 .6px #aab0ba,1px 1px 2px rgba(0,0,0,.25);overflow:hidden"><div style="position:absolute;white-space:nowrap;line-height:1;font-size:3.2px;color:#9a9a9a;left:4px;top:3px;color:#c9a73a">Gender Dynamics in Wartime Media</div><svg style="position:absolute;left:14.4px;top:8.5px" width="40" height="19" viewBox="0 0 40 19"><rect width="40" height="19" fill="#9bb7c8"/><rect x="0" y="0" width="17" height="9" fill="#56a8dc"/><rect x="0" y="9" width="15" height="10" fill="#e4cf52"/><rect x="13" y="3" width="9" height="16" fill="#8d8a70"/><rect x="20" y="2" width="12" height="17" fill="#5a6248"/><rect x="30" y="5" width="10" height="14" fill="#7f8468"/><rect x="22" y="3" width="5" height="5" fill="#c8a084"/></svg><div style="position:absolute;white-space:nowrap;line-height:1;font-size:3.2px;color:#9a9a9a;left:4px;top:30px;font-size:2.2px">Women in War</div><div style="position:absolute;white-space:nowrap;line-height:1;font-size:3.2px;color:#9a9a9a;left:4px;top:34px;color:#c9a73a">2022–2025</div><div style="position:absolute;white-space:nowrap;line-height:1;font-size:3.2px;color:#9a9a9a;left:50px;top:30px;font-size:2.2px">Men in War</div><div style="position:absolute;white-space:nowrap;line-height:1;font-size:3.2px;color:#9a9a9a;left:50px;top:33px;font-size:2.2px">Heroic, defenders</div><div style="position:absolute;right:2px;bottom:2px;width:8px;height:2px;background:#2a3a80;border-radius:1px"></div></div>
<div class="abs" style="left:13px;top:193.9px;width:74px;height:40.5px;background:#fdfdfd;box-shadow:0 0 0 .6px #aab0ba,1px 1px 2px rgba(0,0,0,.25);overflow:hidden"><div style="position:absolute;white-space:nowrap;line-height:1;font-size:3.2px;color:#9a9a9a;left:5px;top:7px;color:#d3ae35">Toward Inclusive Representation</div><div style="position:absolute;white-space:nowrap;line-height:1;font-size:3.2px;color:#9a9a9a;left:5px;top:11px;color:#d3ae35">of War</div><div style="position:absolute;left:5px;top:16px;width:5px;height:4.5px;border-radius:1px;background:#efd556"></div><div style="position:absolute;white-space:nowrap;line-height:1;font-size:3.2px;color:#9a9a9a;left:12px;top:16.5px;font-size:2.2px">Balanced stories</div><div style="position:absolute;white-space:nowrap;line-height:1;font-size:3.2px;color:#9a9a9a;left:12px;top:19px;font-size:2px;color:#bbb">Include diverse voices</div><div style="position:absolute;left:5px;top:23px;width:5px;height:4.5px;border-radius:1px;background:#efd556"></div><div style="position:absolute;white-space:nowrap;line-height:1;font-size:3.2px;color:#9a9a9a;left:12px;top:23.5px;font-size:2.2px">Balanced stories</div><div style="position:absolute;white-space:nowrap;line-height:1;font-size:3.2px;color:#9a9a9a;left:12px;top:26px;font-size:2px;color:#bbb">Include diverse voices</div><div style="position:absolute;left:5px;top:30px;width:5px;height:4.5px;border-radius:1px;background:#efd556"></div><div style="position:absolute;white-space:nowrap;line-height:1;font-size:3.2px;color:#9a9a9a;left:12px;top:30.5px;font-size:2.2px">Balanced stories</div><div style="position:absolute;white-space:nowrap;line-height:1;font-size:3.2px;color:#9a9a9a;left:12px;top:33px;font-size:2px;color:#bbb">Include diverse voices</div><svg style="position:absolute;left:49.3px;top:0" width="25" height="41" viewBox="0 0 25 41"><rect width="25" height="41" fill="#2f8fc6"/><g fill="none" stroke-width="3.2" stroke-linecap="round"><path d="M-2 4C6 -1 12 9 27 2" stroke="#e9d44a"/><path d="M-2 10C8 4 14 16 27 8" stroke="#45b0a0"/><path d="M-2 16C6 11 16 23 27 14" stroke="#efd850"/><path d="M-2 23C8 16 14 29 27 21" stroke="#2a78c0"/><path d="M-2 29C8 23 15 35 27 27" stroke="#e6cf46"/><path d="M-2 35C7 30 15 41 27 33" stroke="#4ab4a8"/><path d="M-2 41C8 35 16 46 27 39" stroke="#ecd64c"/></g></svg></div>
<div class="abs" style="left:114.8px;top:143.6px;width:447.2px;height:251px;background:#fdfdfd;box-shadow:0 0 0 .7px #a9adb4,1.5px 2px 3px rgba(0,0,0,.35)"><div class="t" id="st1" style="left:77.8px;top:5.4px;font-family:'DejaVu Sans Light','DejaVu Sans',sans-serif;font-weight:200;font-size:19.2px;color:#6f6f6f;transform-origin:0 0;transform:scaleX(.828)">LANGUAGE OF RESISTANCE: GENDER</div>
<div class="t" id="st2" style="left:77.8px;top:27.4px;font-family:'DejaVu Sans Light','DejaVu Sans',sans-serif;font-weight:200;font-size:19.2px;color:#6f6f6f;transform-origin:0 0;transform:scaleX(.832)">ROLES IN WAR PROPAGANDA</div>
<div class="abs" id="simg" style="left:107.2px;top:53.4px;width:211px;height:118.5px;background:#3d9ce0"><svg width="211" height="118.5" viewBox="0 0 211 118.5" style="position:absolute;left:0;top:0">
<defs><filter id="sb" x="-5%" y="-5%" width="110%" height="110%"><feGaussianBlur stdDeviation=".45"/></filter>
<filter id="camof" x="0" y="0" width="100%" height="100%" color-interpolation-filters="sRGB"><feTurbulence type="fractalNoise" baseFrequency=".17 .2" numOctaves="2" seed="11" result="n"/><feColorMatrix in="n" type="matrix" values="1.8 0 0 0 -0.4  1.8 0 0 0 -0.4  1.8 0 0 0 -0.4  0 0 0 0 1" result="g"/><feComponentTransfer in="g" result="c"><feFuncR type="discrete" tableValues=".38 .45 .64 .68 .72 .86 .84"/><feFuncG type="discrete" tableValues=".45 .52 .68 .71 .74 .86 .85"/><feFuncB type="discrete" tableValues=".30 .35 .52 .54 .58 .76 .74"/></feComponentTransfer><feComposite in="c" in2="SourceGraphic" operator="in"/></filter></defs>
<rect width="211" height="118.5" fill="#3d9ce0"/>
<g filter="url(#sb)">
<rect x="0" y="93" width="25" height="9" fill="#3567c6"/>
<!-- NEWS banner -->
<path d="M1.5 8.5H58V31.5H1.5Z" fill="#d2566c"/>
<!-- reporter hair back -->
<path d="M66 10C56 9 52 18 52 28C50 36 38 38 30 42C24 46 24 54 30 56C40 58 52 56 60 52L74 48C78 40 80 28 78 20C76 13 72 10 66 10Z" fill="#e19d58"/>
<!-- neck / face -->
<path d="M58 40H68V52H58Z" fill="#eab88e"/>
<path d="M59 20C59 15 64 13 69 14C74 15 76 19 76 26C76 34 73 41 68 41C62 41 59 33 59 20Z" fill="#f3cba2"/>
<path d="M56 22C56 13 62 9 69 10C75 11 78 15 77 20C72 20 66 18 63 15C62 20 60 26 58 30Z" fill="#e19d58"/>
<rect x="65" y="32.5" width="6" height="2.2" rx="1" fill="#fff"/>
<circle cx="64.5" cy="25.5" r=".8" fill="#333"/><circle cx="72" cy="25.5" r=".8" fill="#333"/>
<!-- jacket -->
<path d="M25 101C24 80 26 60 34 52C40 47 50 46 56 45L70 45C78 46 84 50 86 58L88 101Z" fill="#2d3e82"/>
<path d="M49 47L66 47L67 101H52Z" fill="#da737e"/>
<path d="M49 46L55 101H47C46 80 46 60 49 46Z" fill="#25336e"/>
<path d="M66 46L70 101H64C65 80 65 60 66 46Z" fill="#25336e"/>
<!-- arm with mic -->
<path d="M84 92C86 80 90 66 94 56L100 58C98 70 94 86 90 101H84Z" fill="#efc09a"/>
<path d="M78 101L84 78L91 80L88 101Z" fill="#2d3e82"/>
<path d="M80 36L84 33L99 54L95 57Z" fill="#1d1d24"/><path d="M84.5 41L88.5 38.5L93 45L89 47.5Z" fill="#6b7384"/>
<ellipse cx="96" cy="53" rx="3.5" ry="4" fill="#f0c39c"/>
<!-- female soldier -->
<path d="M96 101C96 82 98 60 106 50L122 43H140L154 49C158 60 160 84 158 101Z" fill="#a4ac88" filter="url(#camof)"/>
<path d="M111 46C114 43 120 42.5 123 42.5C125 47 135 47 137 42.5C141 42.5 146 43 148.5 46L150 101H110Z" fill="#587c44"/>
<path d="M113 62H147M113 76H147M113 90H147" stroke="#4c6e3a" stroke-width=".7"/>
<path d="M126 37H134V45.5H126Z" fill="#e4b494"/>
<path d="M119 27C118 18 123 14.5 130 14.5C137 14.5 142 18 141.5 27C141.5 32 140.5 36 139 38.5L121 38.5C119.5 36 119 32 119 27Z" fill="#8d5a44"/>
<path d="M123 27C123 22 126 19.5 130.5 19.5C135 19.5 138 22 138 28C138 36 135 41 130.5 41C126 41 123 35 123 27Z" fill="#f1c6a6"/>
<path d="M121 25C122 18 127 16 131 16C136 16 140 19 140 25C137 21 133 20 130 20.5C126 21 123 22 121 25Z" fill="#96604a"/>
<circle cx="127.5" cy="28" r=".8" fill="#3a2a26"/><circle cx="134" cy="28" r=".8" fill="#3a2a26"/>
<path d="M127.5 34C129.5 36 132.5 36 134.5 34" stroke="#a0524a" stroke-width=".8" fill="none"/>
<path d="M136 54C137 51.5 140 51 141 53L142 51.5C143 50 145 50.5 145 52.5L147 56C148 60 146 65 142 66C138 66.5 135 63 135 59Z" fill="#e8b494"/>
<!-- helmet prop -->
<path d="M95 101V84C96 76 104 72 110 75C112.5 77 113 80 113 84V101Z" fill="#8c8c5c"/><path d="M95 88H113" stroke="#76764a" stroke-width=".8"/>
<!-- male soldier -->
<path d="M148 101C147 84 148 62 154 50C160 43 168 41 174 40L184 40C194 42 202 46 205 56L208 76L197 78L199 101Z" fill="#a4ac88" filter="url(#camof)"/>
<path d="M197 76L207 74C208 82 209 90 209 97L202 98C200 90 198 84 197 76Z" fill="#e0a680"/>
<rect x="201.5" y="62" width="4" height="3" fill="#e8c840"/>
<path d="M170 34H182V44H170Z" fill="#dca27c"/>
<path d="M167.5 18C167.5 13 172 11 177 11.5C182 12 184.5 15 184 21L183.5 30H168Z" fill="#e6b088"/>
<path d="M167 22.5C169 25.5 171 26.5 174 26C178 25.5 181 26 183.8 22.5C184.5 31 181.5 37 175.5 37.5C169.5 37 166.5 31 167 22.5Z" fill="#4a2c22"/>
<path d="M172 29.5C174 31 177.5 31 179.5 29.5C178.5 32 173 32 172 29.5Z" fill="#fff"/>
<circle cx="172" cy="20.5" r=".8" fill="#2a1a16"/><circle cx="180" cy="20.5" r=".8" fill="#2a1a16"/>
<path d="M165 17C165 9 170 5.5 177 6C184 6.5 187.5 11 186.5 17L186 19C180 16.5 171 16.5 165 19Z" fill="#a4ac88" filter="url(#camof)"/>
<path d="M164.5 18.5C170 16 181 16 187 18.5L186.5 20.5C180 18.5 171 18.5 165 20.5Z" fill="#7a8460"/>
<path d="M165.5 40C162 45 159 52 158.5 61L161.5 61.5C162 53 164 47 168 41Z" fill="#15161c"/><path d="M181 41C188 46 193 58 194 72L197.5 71C196.5 56 191 45 184 40Z" fill="#15161c"/><path d="M161 53.5H186V55H161Z" fill="#15161c"/>
<path d="M175 84.5H187V87.5H175Z" fill="#23262a"/><path d="M186 81H193V91H186Z" fill="#5a6a48"/>
<!-- live badge -->
<rect x="187.5" y="8" width="22" height="7.8" fill="#d85a7c"/>
</g>
<!-- caption band -->
<rect x="0" y="101.5" width="211" height="17" fill="#e9e9f6"/>
<rect x=".6" y=".6" width="209.8" height="117.3" fill="none" stroke="#263a78" stroke-width="1.2"/>
<path d="M0 101.5H211" stroke="#3a4e90" stroke-width=".6"/>
<text x="6" y="25" font-family="Liberation Sans, sans-serif" font-weight="bold" font-size="13.5" fill="#fff" textLength="41.5" lengthAdjust="spacingAndGlyphs">NEWS</text>
<text x="190" y="14" font-family="Liberation Sans, sans-serif" font-weight="bold" font-size="5.6" fill="#fff">• live</text>
<text x="87" y="99.2" font-family="Liberation Sans, sans-serif" font-weight="bold" font-size="4.6" fill="#fff" textLength="38" lengthAdjust="spacingAndGlyphs">and equal way.</text>
<text x="21" y="112" font-family="Liberation Sans, sans-serif" font-weight="bold" font-style="italic" font-size="6.2" fill="#1f2450" textLength="148" lengthAdjust="spacingAndGlyphs">Ukraine needs women in all areas of society</text>
</svg></div>
<div class="t sb" style="left:107.4px;top:185.7px;font-size:7.5px;color:#8a8a8a;letter-spacing:-0.04px;">Media narratives around gender evolve during conflict, reshaping</div>
<div class="t sb" style="left:107.4px;top:197.3px;font-size:7.5px;color:#8a8a8a;letter-spacing:0px;">resistance and national identity.</div>
<div class="t sb" style="left:107.4px;top:215.2px;font-size:7.5px;color:#8a8a8a;letter-spacing:-0.18px;"><b style="color:#4a4a4a">Author:</b> Bashlii Anastasiia</div>
<div class="t sb" style="left:107.4px;top:226.7px;font-size:7.5px;color:#8a8a8a;letter-spacing:-0.15px;"><b style="color:#4a4a4a">Supervisor:</b> Anna Brutman</div>
<div class="abs" style="left:394.2px;top:238.3px;width:49.5px;height:9px;border-radius:4.5px;background:#162a62;color:#dfe5ff;font-size:3.8px;line-height:9px;text-align:center;white-space:nowrap">Made with <b>GAMMA</b></div></div>
<div class="abs" style="left:582px;top:82px;width:10px;height:369px;background:linear-gradient(90deg,#cdd0d5,#dcdee2 60%,#e4e6e9);border-left:1px solid #b9bcc3"></div>
<div class="abs" style="left:583px;top:93px;width:8px;height:108px;background:linear-gradient(90deg,#f0f1f4,#dfe1e6);border:1px solid #b6bac2;border-radius:1.5px"></div>
<svg class="abs" style="left:584px;top:86.5px" width="6" height="4" viewBox="0 0 6 4"><path d="M0 4L3 .8L6 4Z" fill="#4a4e58"/></svg>
<svg class="abs" style="left:585px;top:144.5px" width="4" height="5" viewBox="0 0 4 5"><path d="M0 .5H4M0 2.5H4M0 4.5H4" stroke="#a9adb5" stroke-width=".7"/></svg>
<svg class="abs" style="left:585.3px;top:420px" width="4.4" height="3" viewBox="0 0 6 4"><path d="M0 0L3 3.5L6 0Z" fill="#4a4e56"/></svg>
<svg class="abs" style="left:585.3px;top:429.5px" width="4.4" height="5.2" viewBox="0 0 6 7"><path d="M0 3.5L3 0L6 3.5ZM0 7L3 3.5L6 7Z" fill="#4a4e56"/></svg>
<svg class="abs" style="left:585.3px;top:438.5px" width="4.4" height="5.2" viewBox="0 0 6 7"><path d="M0 0L3 3.5L6 0ZM0 3.5L3 7L6 3.5Z" fill="#4a4e56"/></svg>
</div>
<!-- PANEL -->
<div id="panel" class="abs">
<div class="abs" style="left:0;top:0;width:212px;height:30px;background:#f1f3f6"></div>
<div class="t" id="ptl" style="left:59px;top:11px;font-size:9.3px;font-weight:bold;color:#1f1f1f;letter-spacing:-0.2px">Участники (22)</div>
<svg class="abs" style="left:182.5px;top:10px" width="11" height="11" viewBox="0 0 11 11" fill="none" stroke="#5f6368" stroke-width="1.1"><path d="M5 1.3H2.8A1.5 1.5 0 0 0 1.3 2.8V8.2A1.5 1.5 0 0 0 2.8 9.7H8.2A1.5 1.5 0 0 0 9.7 8.2V6"/><path d="M5 6L9.8 1.2M6.8 1H10V4.2"/></svg>
<svg class="abs" style="left:201.5px;top:12px" width="8" height="8" viewBox="0 0 8 8"><path d="M.5 .5L7.5 7.5M7.5 .5L.5 7.5" stroke="#8a8d92" stroke-width="1"/></svg>
<div class="abs" style="left:13.5px;top:37.5px;width:193px;height:21px;border:1px solid #cfd1d4;border-radius:5px;background:#fff"></div>
<svg class="abs" style="left:22px;top:43.5px" width="9" height="9" viewBox="0 0 9 9" fill="none" stroke="#8a8a8a" stroke-width="1"><circle cx="3.8" cy="3.8" r="2.8"/><path d="M6 6L8.3 8.3"/></svg>
<div class="t" id="psr" style="left:32.7px;top:43.8px;font-size:8.7px;color:#8b8b8b;letter-spacing:-0.15px">Найти участника</div>
<div class="abs" style="left:0;top:60px;width:212px;height:427px;overflow:hidden">
<div class="row" style="top:4.4px"><div class="av"><svg width="19" height="19" viewBox="0 0 19 19" style="display:block;filter:blur(.55px)"><rect width="19" height="19" fill="#4f6a4c"/><rect x="0" y="0" width="6" height="19" fill="#3f5a40"/><ellipse cx="10" cy="9" rx="6.5" ry="7" fill="#9a9088"/><ellipse cx="10" cy="10" rx="4.6" ry="5.6" fill="#d4bcae"/><rect x="5.5" y="8" width="9" height="2.2" rx="1" fill="#6a5a58"/><path d="M2 19C3 16 7 15.5 10 15.5C13 15.5 17 16 18 19Z" fill="#c8c0b8"/></svg></div><div class="n" style="letter-spacing:-0.376px">Галина Василе...</div><div class="n" style="left:107px;letter-spacing:-0.138px">(Организатор, я)</div><svg class="ic" style="left:175.4px" width="8" height="12" viewBox="0 0 8 12" fill="none" stroke="#8e8e8e" stroke-width=".9"><rect x="2.5" y=".8" width="3" height="6" rx="1.5"/><path d="M1 5.2a3 3 0 0 0 6 0M4 8.3V10.5M2.3 10.8H5.7"/></svg><svg class="ic" style="left:190px;top:5.5px" width="13" height="8" viewBox="0 0 13 8" fill="none" stroke="#8e8e8e" stroke-width=".9"><rect x=".6" y=".6" width="8" height="6.8" rx="1.3"/><path d="M8.6 3L11.5 1.3V6.7L8.6 5"/></svg></div>
<div class="row" style="top:32.1px"><div class="av" style="background:#27a587;font-size:9.5px">A</div><div class="n" style="letter-spacing:-0.218px">Анастасія Башлій</div><svg class="ic" style="left:158px;top:5.5px" width="11" height="8" viewBox="0 0 11 8"><rect width="11" height="8" rx="1.3" fill="#17a84a"/><path d="M5.5 1.8L7.8 4.3H6.3V6.3H4.7V4.3H3.2Z" fill="#fff"/></svg><svg class="ic" style="left:175.4px" width="8" height="12" viewBox="0 0 8 12" fill="none" stroke="#5a5a5a" stroke-width=".9"><rect x="2.5" y=".8" width="3" height="6" rx="1.5" fill="#6a6a6a"/><path d="M1 5.2a3 3 0 0 0 6 0M4 8.3V10.5M2.3 10.8H5.7"/></svg><svg class="ic" style="left:190px;top:5.5px" width="13" height="8" viewBox="0 0 13 8" fill="none" stroke="#8e8e8e" stroke-width=".9"><rect x=".6" y=".6" width="8" height="6.8" rx="1.3"/><path d="M8.6 3L11.5 1.3V6.7L8.6 5"/></svg></div>
<div class="row" style="top:59.8px"><div class="av" style="background:#e8437b;font-size:9.5px">T</div><div class="n" style="letter-spacing:-0.259px">Tetiana</div><svg class="ic" style="left:175.4px" width="8" height="12" viewBox="0 0 8 12" fill="none" stroke="#8e8e8e" stroke-width=".9"><rect x="2.5" y=".8" width="3" height="6" rx="1.5"/><path d="M1 5.2a3 3 0 0 0 6 0M4 8.3V10.5M2.3 10.8H5.7"/></svg><svg class="ic" style="left:190px;top:5.5px" width="13" height="8" viewBox="0 0 13 8" fill="none" stroke="#8e8e8e" stroke-width=".9"><rect x=".6" y=".6" width="8" height="6.8" rx="1.3"/><path d="M8.6 3L11.5 1.3V6.7L8.6 5"/></svg></div>
<div class="row" style="top:87.6px"><div class="av"><svg width="19" height="19" viewBox="0 0 19 19" style="display:block;filter:blur(.55px)"><rect width="19" height="19" fill="#ecebe9"/><circle cx="9.5" cy="7" r="3.6" fill="#c9a48e"/><path d="M1 19C2 12 6 11 9.5 11C13 11 17 12 18 19Z" fill="#1d1d22"/></svg></div><div class="n" style="letter-spacing:-0.086px">Yuriy Polyezhayev</div><svg class="ic" style="left:175.4px" width="8" height="12" viewBox="0 0 8 12" fill="none" stroke="#8e8e8e" stroke-width=".9"><rect x="2.5" y=".8" width="3" height="6" rx="1.5"/><path d="M1 5.2a3 3 0 0 0 6 0M4 8.3V10.5M2.3 10.8H5.7"/></svg><svg class="ic" style="left:190px;top:5.5px" width="13" height="8" viewBox="0 0 13 8" fill="none" stroke="#8e8e8e" stroke-width=".9"><rect x=".6" y=".6" width="8" height="6.8" rx="1.3"/><path d="M8.6 3L11.5 1.3V6.7L8.6 5"/></svg></div>
<div class="row" style="top:115.3px"><div class="av"><svg width="19" height="19" viewBox="0 0 19 19" style="display:block;filter:blur(.55px)"><rect width="19" height="19" fill="#8a5230"/><ellipse cx="9.5" cy="9" rx="8" ry="8.5" fill="#b8703a"/><ellipse cx="9.5" cy="10.5" rx="5.6" ry="6.6" fill="#ecc4a8"/><path d="M3.5 9C4 3 15 3 15.5 9C13 5.5 6 5.5 3.5 9Z" fill="#c47a3e"/><rect x="6.5" y="13" width="6" height="1.2" rx=".6" fill="#b86a5a"/></svg></div><div class="n" style="letter-spacing:-0.046px">Anna Brutman</div><svg class="ic" style="left:174.4px" width="10" height="12" viewBox="0 0 10 12" fill="none" stroke="#ee5b55" stroke-width=".9"><rect x="3.5" y=".8" width="3" height="6" rx="1.5" fill="#f6a09c"/><path d="M2 5.2a3 3 0 0 0 6 0M5 8.3V10.5M3.3 10.8H6.7"/><path d="M9.5 .8L.7 11" stroke-width="1"/></svg><svg class="ic" style="left:190px;top:5.5px" width="13" height="8" viewBox="0 0 13 8" fill="none" stroke="#8e8e8e" stroke-width=".9"><rect x=".6" y=".6" width="8" height="6.8" rx="1.3"/><path d="M8.6 3L11.5 1.3V6.7L8.6 5"/></svg></div>
<div class="row" style="top:143.0px"><div class="av" style="background:#2bb24c;font-size:8.3px">MI</div><div class="n" style="letter-spacing:-0.007px">Mamkichev Illia</div><svg class="ic" style="left:174.4px" width="10" height="12" viewBox="0 0 10 12" fill="none" stroke="#ee5b55" stroke-width=".9"><rect x="3.5" y=".8" width="3" height="6" rx="1.5" fill="#f6a09c"/><path d="M2 5.2a3 3 0 0 0 6 0M5 8.3V10.5M3.3 10.8H6.7"/><path d="M9.5 .8L.7 11" stroke-width="1"/></svg><svg class="ic" style="left:190px;top:4px" width="13" height="11" viewBox="0 0 13 11" fill="none" stroke="#ee5b55" stroke-width=".9"><rect x=".6" y="2.1" width="8" height="6.8" rx="1.3"/><path d="M8.6 4.5L11.5 2.8V8.2L8.6 6.5"/><path d="M11.5 .6L1 10.4" stroke-width="1"/></svg></div>
<div class="row" style="top:170.7px"><div class="av"><svg width="19" height="19" viewBox="0 0 19 19" style="display:block;filter:blur(.55px)"><rect width="19" height="19" fill="#dedede"/><rect x="0" y="0" width="19" height="5" fill="#eceef0"/><ellipse cx="9.5" cy="8" rx="3.4" ry="4" fill="#b29484"/><path d="M6 6C6 3 13 3 13 6C11 5 8 5 6 6Z" fill="#5a5050"/><path d="M2 19C3 13.5 6.5 12.5 9.5 12.5C12.5 12.5 16 13.5 17 19Z" fill="#5c5e66"/></svg></div><div class="n" style="letter-spacing:0.023px">Nikita Iliuchenko</div><svg class="ic" style="left:191.5px" width="10" height="12" viewBox="0 0 10 12" fill="none" stroke="#ee5b55" stroke-width=".9"><rect x="3.5" y=".8" width="3" height="6" rx="1.5" fill="#f6a09c"/><path d="M2 5.2a3 3 0 0 0 6 0M5 8.3V10.5M3.3 10.8H6.7"/><path d="M9.5 .8L.7 11" stroke-width="1"/></svg></div>
<div class="row" style="top:198.4px"><div class="av" style="background:#27a587;font-size:9.5px">A</div><div class="n" style="letter-spacing:-0.039px">Аліна Боровик ГФ-213</div><svg class="ic" style="left:174.4px" width="10" height="12" viewBox="0 0 10 12" fill="none" stroke="#ee5b55" stroke-width=".9"><rect x="3.5" y=".8" width="3" height="6" rx="1.5" fill="#f6a09c"/><path d="M2 5.2a3 3 0 0 0 6 0M5 8.3V10.5M3.3 10.8H6.7"/><path d="M9.5 .8L.7 11" stroke-width="1"/></svg><svg class="ic" style="left:190px;top:4px" width="13" height="11" viewBox="0 0 13 11" fill="none" stroke="#ee5b55" stroke-width=".9"><rect x=".6" y="2.1" width="8" height="6.8" rx="1.3"/><path d="M8.6 4.5L11.5 2.8V8.2L8.6 6.5"/><path d="M11.5 .6L1 10.4" stroke-width="1"/></svg></div>
<div class="row" style="top:226.2px"><div class="av" style="background:#2c8be6;font-size:9.5px">A</div><div class="n" style="letter-spacing:-0.114px">Анастасія Биліменко</div><svg class="ic" style="left:174.4px" width="10" height="12" viewBox="0 0 10 12" fill="none" stroke="#ee5b55" stroke-width=".9"><rect x="3.5" y=".8" width="3" height="6" rx="1.5" fill="#f6a09c"/><path d="M2 5.2a3 3 0 0 0 6 0M5 8.3V10.5M3.3 10.8H6.7"/><path d="M9.5 .8L.7 11" stroke-width="1"/></svg><svg class="ic" style="left:190px;top:4px" width="13" height="11" viewBox="0 0 13 11" fill="none" stroke="#ee5b55" stroke-width=".9"><rect x=".6" y="2.1" width="8" height="6.8" rx="1.3"/><path d="M8.6 4.5L11.5 2.8V8.2L8.6 6.5"/><path d="M11.5 .6L1 10.4" stroke-width="1"/></svg></div>
<div class="row" style="top:253.9px"><div class="av"><svg width="19" height="19" viewBox="0 0 19 19" style="display:block;filter:blur(.55px)"><rect width="19" height="19" fill="#5a4c4a"/><rect x="12" y="0" width="7" height="19" fill="#b8b0ae"/><ellipse cx="9.5" cy="10" rx="7" ry="9" fill="#4a342e"/><ellipse cx="9.8" cy="9" rx="4.2" ry="5.2" fill="#ecd0c4"/><path d="M5 8C5.5 3 14 3 14.5 8C12 5 8 5 5 8Z" fill="#5a4036"/><path d="M3 19C4 16 16 16 17 19Z" fill="#d8c8c0"/></svg></div><div class="n" style="letter-spacing:-0.121px">Анастасія Мелешко</div><svg class="ic" style="left:174.4px" width="10" height="12" viewBox="0 0 10 12" fill="none" stroke="#ee5b55" stroke-width=".9"><rect x="3.5" y=".8" width="3" height="6" rx="1.5" fill="#f6a09c"/><path d="M2 5.2a3 3 0 0 0 6 0M5 8.3V10.5M3.3 10.8H6.7"/><path d="M9.5 .8L.7 11" stroke-width="1"/></svg><svg class="ic" style="left:190px;top:4px" width="13" height="11" viewBox="0 0 13 11" fill="none" stroke="#ee5b55" stroke-width=".9"><rect x=".6" y="2.1" width="8" height="6.8" rx="1.3"/><path d="M8.6 4.5L11.5 2.8V8.2L8.6 6.5"/><path d="M11.5 .6L1 10.4" stroke-width="1"/></svg></div>
<div class="row" style="top:281.6px"><div class="av"><svg width="19" height="19" viewBox="0 0 19 19" style="display:block;filter:blur(.55px)"><rect width="19" height="19" fill="#b88450"/><ellipse cx="9.5" cy="10" rx="8" ry="9.5" fill="#e08a38"/><ellipse cx="9.5" cy="9.5" rx="4" ry="5" fill="#f6dcc8"/><path d="M5 8C5.5 3.5 13.5 3.5 14 8C12 6 7 6 5 8Z" fill="#e89a48"/><path d="M4 19C5 15.5 14 15.5 15 19Z" fill="#f0e0d0"/></svg></div><div class="n" style="letter-spacing:-0.12px">Аня Леонтьева</div><svg class="ic" style="left:174.4px" width="10" height="12" viewBox="0 0 10 12" fill="none" stroke="#ee5b55" stroke-width=".9"><rect x="3.5" y=".8" width="3" height="6" rx="1.5" fill="#f6a09c"/><path d="M2 5.2a3 3 0 0 0 6 0M5 8.3V10.5M3.3 10.8H6.7"/><path d="M9.5 .8L.7 11" stroke-width="1"/></svg><svg class="ic" style="left:190px;top:4px" width="13" height="11" viewBox="0 0 13 11" fill="none" stroke="#ee5b55" stroke-width=".9"><rect x=".6" y="2.1" width="8" height="6.8" rx="1.3"/><path d="M8.6 4.5L11.5 2.8V8.2L8.6 6.5"/><path d="M11.5 .6L1 10.4" stroke-width="1"/></svg></div>
<div class="row" style="top:309.3px"><div class="av"><svg width="19" height="19" viewBox="0 0 19 19" style="display:block;filter:blur(.55px)"><rect width="19" height="19" fill="#7a5a3c"/><ellipse cx="9.5" cy="9.5" rx="8.5" ry="9" fill="#94704a"/><ellipse cx="9.5" cy="10" rx="6" ry="7" fill="#dcae90"/><path d="M3 8C4 2.5 15 2.5 16 8C13 5 6 5 3 8Z" fill="#8a6644"/><path d="M0 19V16C6 18 13 18 19 16V19Z" fill="#5a4434"/></svg></div><div class="n" style="letter-spacing:-0.002px">Вікторія ГОРЛАЧОВА</div><svg class="ic" style="left:174.4px" width="10" height="12" viewBox="0 0 10 12" fill="none" stroke="#ee5b55" stroke-width=".9"><rect x="3.5" y=".8" width="3" height="6" rx="1.5" fill="#f6a09c"/><path d="M2 5.2a3 3 0 0 0 6 0M5 8.3V10.5M3.3 10.8H6.7"/><path d="M9.5 .8L.7 11" stroke-width="1"/></svg><svg class="ic" style="left:190px;top:5.5px" width="13" height="8" viewBox="0 0 13 8" fill="none" stroke="#8e8e8e" stroke-width=".9"><rect x=".6" y=".6" width="8" height="6.8" rx="1.3"/><path d="M8.6 3L11.5 1.3V6.7L8.6 5"/></svg></div>
<div class="row" style="top:337.0px"><div class="av"><svg width="19" height="19" viewBox="0 0 19 19" style="display:block;filter:blur(.55px)"><rect width="19" height="19" fill="#e2e2e4"/><ellipse cx="8" cy="7" rx="5" ry="5" fill="#2a2428"/><ellipse cx="9" cy="9" rx="3.4" ry="4" fill="#caa898"/><path d="M0 19V13C3 11 7 12.5 9 14C12 12 16 12 19 14V19Z" fill="#26262c"/><path d="M11 14L16 8L17.5 9L13 15Z" fill="#3a3234"/></svg></div><div class="n" style="letter-spacing:-0.152px">Влад Гапич</div><svg class="ic" style="left:174.4px" width="10" height="12" viewBox="0 0 10 12" fill="none" stroke="#ee5b55" stroke-width=".9"><rect x="3.5" y=".8" width="3" height="6" rx="1.5" fill="#f6a09c"/><path d="M2 5.2a3 3 0 0 0 6 0M5 8.3V10.5M3.3 10.8H6.7"/><path d="M9.5 .8L.7 11" stroke-width="1"/></svg><svg class="ic" style="left:190px;top:4px" width="13" height="11" viewBox="0 0 13 11" fill="none" stroke="#ee5b55" stroke-width=".9"><rect x=".6" y="2.1" width="8" height="6.8" rx="1.3"/><path d="M8.6 4.5L11.5 2.8V8.2L8.6 6.5"/><path d="M11.5 .6L1 10.4" stroke-width="1"/></svg></div>
<div class="row" style="top:364.8px"><div class="av"><svg width="19" height="19" viewBox="0 0 19 19" style="display:block;filter:blur(.55px)"><rect width="19" height="19" fill="#6f8f6a"/><circle cx="9.5" cy="8" r="3.5" fill="#c8b09c"/><path d="M2 19C3 13 6 12 9.5 12C13 12 16 13 17 19Z" fill="#4a5a50"/><rect x="0" y="0" width="19" height="4" fill="#a9c0a0"/></svg></div><div class="n" style="letter-spacing:-0.239px">ГФ - 213 ЗУ_Філос_03 Олексій Отри...</div><svg class="ic" style="left:191.5px" width="10" height="12" viewBox="0 0 10 12" fill="none" stroke="#ee5b55" stroke-width=".9"><rect x="3.5" y=".8" width="3" height="6" rx="1.5" fill="#f6a09c"/><path d="M2 5.2a3 3 0 0 0 6 0M5 8.3V10.5M3.3 10.8H6.7"/><path d="M9.5 .8L.7 11" stroke-width="1"/></svg></div>
<div class="row" style="top:392.5px"><div class="av"><svg width="19" height="19" viewBox="0 0 19 19" style="display:block;filter:blur(.55px)"><rect width="19" height="19" fill="#7fa8d8"/><rect y="12" width="19" height="7" fill="#c9d8ea"/><path d="M5 19C5 11 7 8 9.5 8C12 8 14 11 14 19Z" fill="#15181f"/><circle cx="9.5" cy="6.5" r="2.3" fill="#1d2028"/></svg></div><div class="n" style="letter-spacing:-0.007px">Даніїл Григор'єв</div><svg class="ic" style="left:174.4px" width="10" height="12" viewBox="0 0 10 12" fill="none" stroke="#ee5b55" stroke-width=".9"><rect x="3.5" y=".8" width="3" height="6" rx="1.5" fill="#f6a09c"/><path d="M2 5.2a3 3 0 0 0 6 0M5 8.3V10.5M3.3 10.8H6.7"/><path d="M9.5 .8L.7 11" stroke-width="1"/></svg><svg class="ic" style="left:190px;top:4px" width="13" height="11" viewBox="0 0 13 11" fill="none" stroke="#ee5b55" stroke-width=".9"><rect x=".6" y="2.1" width="8" height="6.8" rx="1.3"/><path d="M8.6 4.5L11.5 2.8V8.2L8.6 6.5"/><path d="M11.5 .6L1 10.4" stroke-width="1"/></svg></div>
<div class="row" style="top:420.2px"><div class="av"><svg width="19" height="19" viewBox="0 0 19 19" style="display:block;filter:blur(.55px)"><rect width="19" height="19" fill="#5a5a4c"/><rect y="0" width="19" height="5" fill="#3a3a34"/></svg></div><div class="n" style="letter-spacing:0px"></div><svg class="ic" style="left:174.4px" width="10" height="12" viewBox="0 0 10 12" fill="none" stroke="#ee5b55" stroke-width=".9"><rect x="3.5" y=".8" width="3" height="6" rx="1.5" fill="#f6a09c"/><path d="M2 5.2a3 3 0 0 0 6 0M5 8.3V10.5M3.3 10.8H6.7"/><path d="M9.5 .8L.7 11" stroke-width="1"/></svg><svg class="ic" style="left:190px;top:4px" width="13" height="11" viewBox="0 0 13 11" fill="none" stroke="#ee5b55" stroke-width=".9"><rect x=".6" y="2.1" width="8" height="6.8" rx="1.3"/><path d="M8.6 4.5L11.5 2.8V8.2L8.6 6.5"/><path d="M11.5 .6L1 10.4" stroke-width="1"/></svg></div>
</div>
<div class="abs" style="left:210.5px;top:63px;width:2px;height:315px;background:#8f9296;border-radius:1.5px"></div>
<div class="abs" style="left:0;top:487px;width:212px;height:29px;background:#fff"></div>
<div class="abs btn" style="left:7.5px;top:497.5px;width:60.5px;height:16px;border:1px solid #c3c5c9;border-radius:5px;background:#fff;color:#2a2a2a;font-size:8.8px;line-height:14px;text-align:center;white-space:nowrap;letter-spacing:-0.15px">Пригласить</div>
<div class="abs btn" style="left:74.5px;top:497.5px;width:113.5px;height:16px;border:1px solid #c3c5c9;border-radius:5px;background:#fff;color:#2a2a2a;font-size:8.8px;line-height:14px;text-align:center;white-space:nowrap;letter-spacing:-0.15px">Выключить звук для всех</div>
<div class="abs btn" style="left:195px;top:497.5px;width:22px;height:16px;border:1px solid #c3c5c9;border-radius:5px;background:#fff;color:#2a2a2a;font-size:8.8px;line-height:14px;text-align:center;white-space:nowrap;letter-spacing:-0.15px;text-align:left;padding-left:3.5px;letter-spacing:.3px;font-weight:bold;font-size:7px;line-height:11px">···</div>
</div>
</body>
</html>
